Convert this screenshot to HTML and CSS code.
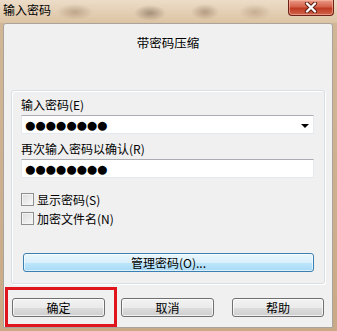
FILE: index.html
```html
<!DOCTYPE html>
<html lang="zh-CN">
<head>
    <meta charset="UTF-8">
    <title>输入密码</title>
    <link rel="stylesheet" href="styles.css">
</head>
<body>
    <div class="window">
        <div class="titlebar">
            <span class="title">输入密码</span>
            <button class="close" aria-label="关闭">
                <svg width="14" height="11" viewBox="0 0 14 11">
                    <path d="M3 1.5 L11 9.5 M11 1.5 L3 9.5" stroke="#5a1a12" stroke-width="4.2" stroke-linecap="round"/>
                    <path d="M3 1.5 L11 9.5 M11 1.5 L3 9.5" stroke="#ffffff" stroke-width="2.4" stroke-linecap="round"/>
                </svg>
            </button>
        </div>
        <div class="client">
            <div class="heading">带密码压缩</div>
            <div class="group">
                <div class="field-label">输入密码(E)</div>
                <div class="combo">
                    <span class="dots">●●●●●●●●</span>
                    <span class="arrow"></span>
                </div>
                <div class="field-label second">再次输入密码以确认(R)</div>
                <div class="textbox">
                    <span class="dots">●●●●●●●●</span>
                </div>
                <label class="check first"><span class="box"></span>显示密码(S)</label>
                <label class="check"><span class="box"></span>加密文件名(N)</label>
                <button class="manage">管理密码(O)...</button>
            </div>
            <div class="actions">
                <div class="highlight">
                    <button class="btn">确定</button>
                </div>
                <button class="btn cancel">取消</button>
                <button class="btn help">帮助</button>
            </div>
        </div>
    </div>
</body>
</html>
```

FILE: styles.css
```css
body {
    margin: 0;
    background: #cdb08f;
    font-family: "Noto Sans CJK SC", "Liberation Sans", sans-serif;
    font-size: 12px;
    color: #000;
}
.window {
    width: 337px;
    height: 331px;
    display: flex;
    flex-direction: column;
    background: linear-gradient(#d2b898, #c9aa86);
}
.titlebar {
    height: 23px;
    display: flex;
    justify-content: space-between;
    align-items: flex-start;
    padding-left: 3px;
    background:
        radial-gradient(ellipse 18px 8px at 75px 12px, rgba(120, 90, 60, 0.35), transparent),
        radial-gradient(ellipse 16px 8px at 150px 13px, rgba(90, 70, 50, 0.45), transparent),
        radial-gradient(ellipse 14px 8px at 205px 12px, rgba(110, 80, 55, 0.4), transparent),
        radial-gradient(ellipse 16px 8px at 255px 12px, rgba(130, 100, 70, 0.3), transparent),
        linear-gradient(#ecdcc8, #dcc3a3);
}
.title {
    line-height: 20px;
    font-size: 12px;
}
.close {
    width: 46px;
    height: 16px;
    margin-right: 3px;
    padding: 0;
    border: 1px solid #6e2218;
    border-top: none;
    border-radius: 0 0 4px 4px;
    background: linear-gradient(#e99a86 0%, #d5624b 45%, #bf3a22 55%, #d0654c 100%);
    box-shadow: inset 0 0 0 1px rgba(255, 200, 180, 0.5);
    display: flex;
    align-items: center;
    justify-content: center;
}
.client {
    box-sizing: border-box;
    margin-left: 3px;
    width: 330px;
    height: 305px;
    background: #f0f0f0;
    border: 1px solid #a9a39b;
    border-radius: 3px 3px 0 0;
}
.heading {
    box-sizing: border-box;
    height: 66px;
    padding-top: 11px;
    line-height: 16px;
    text-align: center;
    font-size: 12.5px;
}
.group {
    margin: 0 7px;
    padding: 6px 10px 11px 9px;
    border: 1px solid #dadfe3;
    border-radius: 3px;
    box-shadow: inset 1px 1px 0 #fff, 1px 1px 0 #fff;
}
.field-label {
    line-height: 16px;
    margin-bottom: 2px;
}
.field-label.second {
    margin-top: 7px;
}
.combo, .textbox {
    box-sizing: border-box;
    height: 19px;
    display: flex;
    align-items: center;
    justify-content: space-between;
    padding: 0 4px 0 2px;
    background: #fff;
    border: 1px solid #e3e9ef;
    border-top-color: #abadb3;
}
.dots {
    font-family: "Liberation Sans", sans-serif;
    font-size: 21px;
    line-height: 17px;
    letter-spacing: -2.4px;
}
.arrow {
    width: 0;
    height: 0;
    border-left: 4px solid transparent;
    border-right: 4px solid transparent;
    border-top: 4px solid #000;
    margin-top: 3px;
}
.check {
    display: flex;
    align-items: center;
    height: 19px;
    line-height: 16px;
}
.check.first {
    margin-top: 12px;
}
.box {
    box-sizing: border-box;
    width: 13px;
    height: 13px;
    margin-right: 3px;
    border: 1px solid #8e8f8f;
    background: linear-gradient(135deg, #dcdcdc, #f8f8f8);
    box-shadow: inset 0 0 0 1px #f4f4f4;
}
.manage {
    display: block;
    box-sizing: border-box;
    width: calc(100% - 2px);
    height: 19px;
    margin: 25px 0 0 2px;
    padding: 0;
    border: 1px solid #3c7fb1;
    border-radius: 3px;
    background: linear-gradient(#eaf6fd 0%, #d9f0fc 50%, #bee6fd 51%, #a7d9f5 100%);
    box-shadow: inset 0 0 0 1px rgba(255, 255, 255, 0.6);
    font-family: inherit;
    font-size: 12px;
    line-height: 16px;
}
.actions {
    display: flex;
    align-items: flex-start;
    margin-top: 3px;
    margin-left: 1px;
}
.highlight {
    width: 112px;
    height: 40px;
    box-sizing: border-box;
    border: 3px solid #e0141c;
    padding: 8px 9px 7px 4px;
}
.btn {
    box-sizing: border-box;
    width: 93px;
    height: 19px;
    padding: 0;
    border: 1px solid #707070;
    border-radius: 3px;
    background: linear-gradient(#f2f2f2 0%, #ebebeb 50%, #dddddd 51%, #cfcfcf 100%);
    box-shadow: inset 0 0 0 1px rgba(255, 255, 255, 0.7);
    font-family: inherit;
    font-size: 12px;
    line-height: 16px;
}
.cancel {
    margin: 11px 0 0 4px;
}
.help {
    width: 92px;
    margin: 11px 0 0 18px;
}
```
